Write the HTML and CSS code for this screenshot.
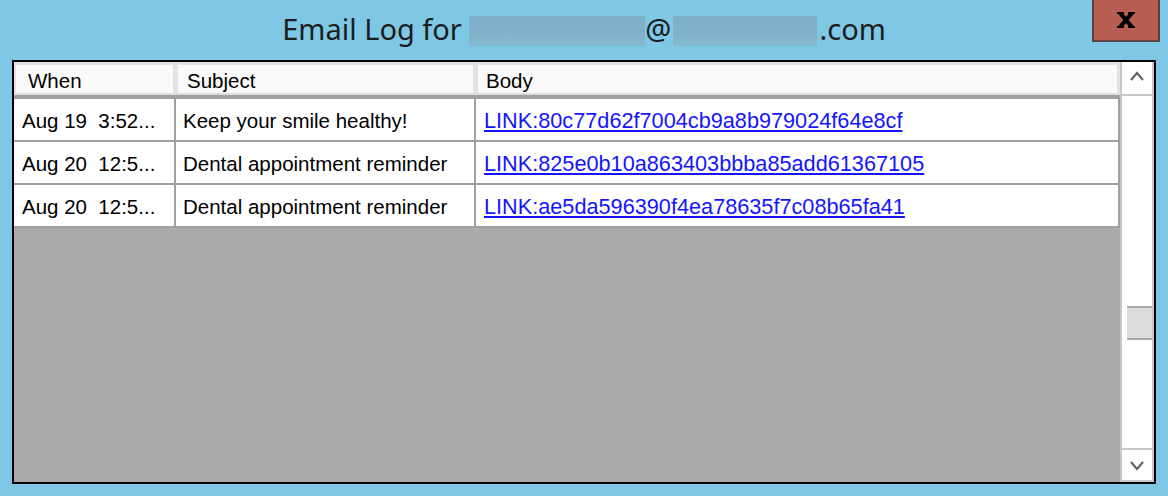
FILE: index.html
```html
<!DOCTYPE html>
<html>
<head>
<meta charset="utf-8">
<title>Email Log</title>
<link rel="stylesheet" href="styles.css">
</head>
<body>
<div class="titlebar">
  <div class="spacer"></div>
  <div class="title">Email Log for <span class="redact r1"></span>@<span class="redact r2"></span>.com</div>
  <div class="close-wrap">
    <div class="close">
      <svg width="18" height="16" viewBox="0 0 18 16">
        <path d="M3 1 L15 15 M15 1 L3 15" stroke="#000" stroke-width="4" fill="none"/>
        <rect x="0" y="0" width="7" height="2" fill="#000"/>
        <rect x="11" y="0" width="7" height="2" fill="#000"/>
        <rect x="0" y="14" width="7" height="2" fill="#000"/>
        <rect x="11" y="14" width="7" height="2" fill="#000"/>
      </svg>
    </div>
  </div>
</div>
<div class="frame">
  <div class="main">
    <div class="hrow">
      <div class="hcell c1">When</div>
      <div class="hcell c2">Subject</div>
      <div class="hcell c3">Body</div>
    </div>
    <div class="row">
      <div class="cell c1">Aug 19&nbsp; 3:52...</div>
      <div class="cell c2">Keep your smile healthy!</div>
      <div class="cell c3"><a class="link" href="#">LINK:80c77d62f7004cb9a8b979024f64e8cf</a></div>
    </div>
    <div class="row">
      <div class="cell c1">Aug 20&nbsp; 12:5...</div>
      <div class="cell c2">Dental appointment reminder</div>
      <div class="cell c3"><a class="link" href="#">LINK:825e0b10a863403bbba85add61367105</a></div>
    </div>
    <div class="row">
      <div class="cell c1">Aug 20&nbsp; 12:5...</div>
      <div class="cell c2">Dental appointment reminder</div>
      <div class="cell c3"><a class="link" href="#">LINK:ae5da596390f4ea78635f7c08b65fa41</a></div>
    </div>
  </div>
  <div class="vscroll">
    <div class="sbtn up">
      <svg width="14" height="10" viewBox="0 0 14 10"><polyline points="1,9 7,2 13,9" stroke="#666" stroke-width="2.2" fill="none"/></svg>
    </div>
    <div class="track">
      <div class="thumb"></div>
    </div>
    <div class="sbtn down">
      <svg width="14" height="10" viewBox="0 0 14 10"><polyline points="1,1 7,8 13,1" stroke="#666" stroke-width="2.2" fill="none"/></svg>
    </div>
  </div>
</div>
</body>
</html>
```

FILE: styles.css
```css
html, body {
  margin: 0;
  padding: 0;
}
body {
  background: #7ec7e5;
  width: 1168px;
  height: 496px;
  overflow: hidden;
  font-family: "Liberation Sans", Arial, sans-serif;
}
.titlebar {
  height: 60px;
  display: grid;
  grid-template-columns: 1fr auto 1fr;
  align-items: start;
}
.title {
  margin-top: 9px;
  font-family: "Noto Sans", "Open Sans", sans-serif;
  font-size: 29px;
  line-height: 40px;
  color: #1c1c1c;
  white-space: pre;
}
.redact {
  display: inline-block;
  height: 30px;
  vertical-align: -6px;
  background: linear-gradient(180deg, #7fb0c9 0%, #80b3cb 60%, #86b8cf 100%);
}
.r1 { width: 176px; }
.r2 { width: 144px; margin-left: 2px; margin-right: 2px; }
.close-wrap {
  display: flex;
  justify-content: flex-end;
  padding-right: 8px;
}
.close {
  width: 68px;
  height: 42px;
  box-sizing: border-box;
  background: #b75d51;
  border: 2px solid #5d413c;
  border-top: none;
  display: flex;
  justify-content: center;
  align-items: flex-start;
  padding-top: 12px;
}
.close svg { display: block; }

.frame {
  margin-left: 12px;
  width: 1144px;
  height: 424px;
  box-sizing: border-box;
  border: 2px solid #000;
  display: flex;
}
.main {
  flex: 1;
  background: #ababab;
  display: flex;
  flex-direction: column;
}
.hrow {
  display: flex;
  border-bottom: 4px solid #a0a0a0;
  background: #fafafa;
}
.hcell {
  height: 33px;
  box-sizing: border-box;
  border: 3px solid #e3e3e3;
  border-bottom: 2px solid #dcdcdc;
  border-left-width: 2px;
  display: flex;
  align-items: center;
  font-size: 20.5px;
  color: #000;
  padding-top: 3px;
}
.hcell.c1 { padding-left: 12px; }
.hcell.c2 { padding-left: 9px; }
.hcell.c3 { padding-left: 8px; }
.c1 { width: 162px; }
.c2 { width: 300px; }
.c3 { flex: 1; }
.row {
  display: flex;
  height: 43px;
}
.cell {
  box-sizing: border-box;
  background: #fff;
  border-right: 2px solid #a0a0a0;
  border-bottom: 2px solid #a0a0a0;
  display: flex;
  align-items: center;
  font-size: 20.5px;
  color: #000;
  white-space: nowrap;
  padding-top: 3px;
}
.cell.c1 { padding-left: 8px; }
.cell.c2 { padding-left: 7px; }
.cell.c3 { padding-left: 8px; }
.link {
  color: #1414ff;
  text-decoration: underline;
  font-size: 21.7px;
}
.vscroll {
  width: 34px;
  box-sizing: border-box;
  background: #fff;
  border-left: 2px solid #c6c6c6;
  border-right: 2px solid #c6c6c6;
  display: flex;
  flex-direction: column;
}
.sbtn {
  display: flex;
  justify-content: center;
  align-items: center;
  box-sizing: border-box;
}
.sbtn svg { display: block; }
.sbtn.up {
  height: 34px;
  border-bottom: 2px solid #c8c8c8;
  padding-bottom: 4px;
}
.sbtn.down {
  height: 34px;
  border-top: 2px solid #c8c8c8;
  border-bottom: 2px solid #c8c8c8;
  padding-top: 2px;
}
.track {
  flex: 1;
  display: flex;
  flex-direction: column;
}
.thumb {
  margin-top: 210px;
  margin-left: 5px;
  height: 34px;
  box-sizing: border-box;
  background: #dcdcdc;
  border-top: 2px solid #a8a8a8;
  border-bottom: 2px solid #a8a8a8;
}
```
